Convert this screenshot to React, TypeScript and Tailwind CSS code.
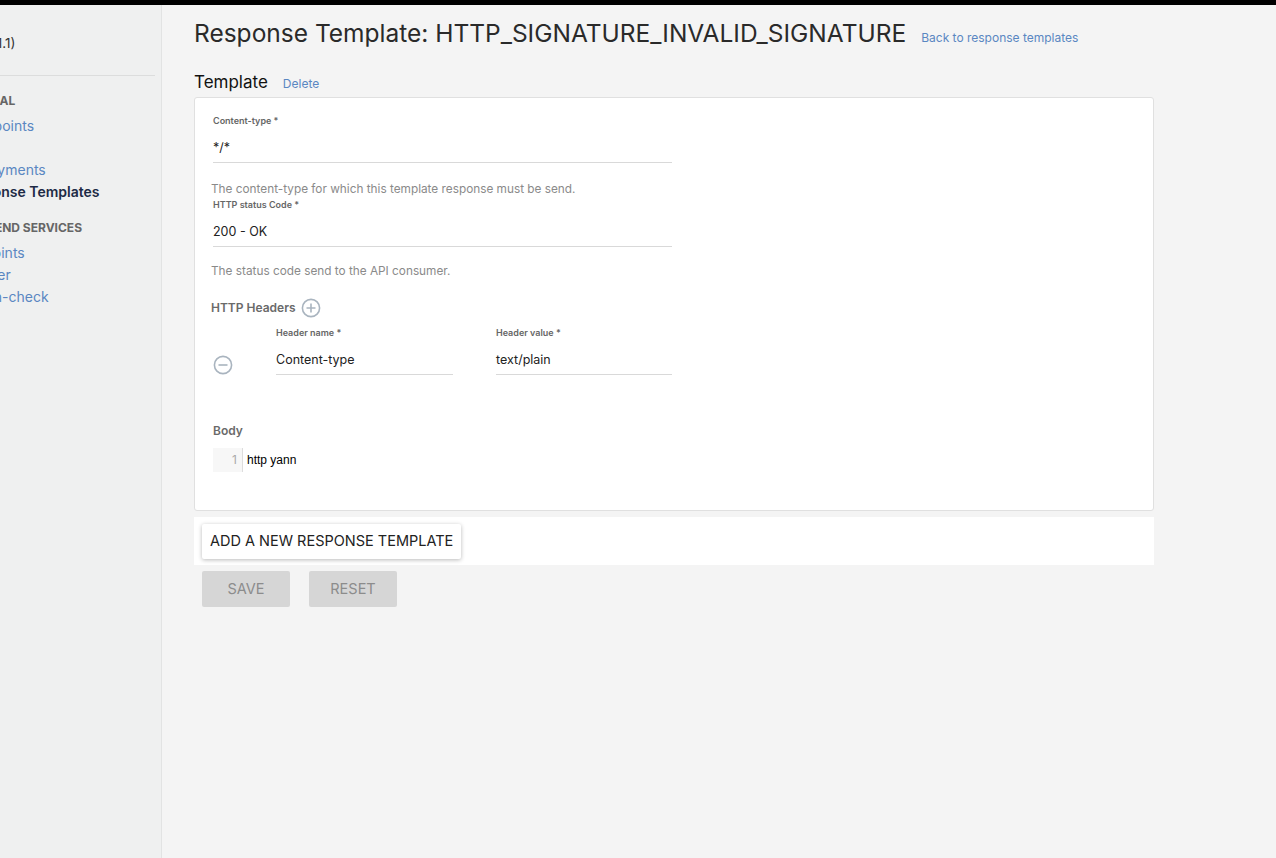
import React from 'react';

const PlusCircle = () => (
  <svg width="20" height="20" viewBox="0 0 20 20" fill="none" stroke="#a9b4bf" strokeWidth="1.6">
    <circle cx="10" cy="10" r="8.6" />
    <path d="M10 5.5v9M5.5 10h9" />
  </svg>
);

const MinusCircle = () => (
  <svg width="20" height="20" viewBox="0 0 20 20" fill="none" stroke="#a9b4bf" strokeWidth="1.6">
    <circle cx="10" cy="10" r="8.6" />
    <path d="M5.5 10h9" />
  </svg>
);

const Field: React.FC<{ label: string; value: string; width: string }> = ({ label, value, width }) => (
  <div className={width}>
    <div className="text-[9px] font-semibold text-[#666] leading-[12px]">{label}</div>
    <div className="mt-[12px] pb-[5px] text-[12.5px] text-[#222] leading-[18px] border-b border-[#d9d9d9]">{value}</div>
  </div>
);

export default function App() {
  return (
    <div className="w-[1276px] h-[858px] flex flex-col bg-[#f4f4f4] overflow-hidden" style={{ fontFamily: 'Inter, "Liberation Sans", sans-serif' }}>
      <div className="h-[5px] bg-black shrink-0" />
      <div className="flex flex-1 min-h-0">
        {/* sidebar, scrolled so the left part is hidden */}
        <aside className="w-[162px] shrink-0 bg-[#eff0f0] border-r border-[#e2e3e3] overflow-hidden">
          <div className="-ml-[41px] pr-[6px] w-[202px]">
            <div className="pt-[28px] pb-[22px] text-[13.5px] text-[#333] leading-[20px] border-b border-[#dcdddd]">
              API (v1.1)
            </div>
            <div className="pt-[16px] text-[12px] font-bold text-[#666] leading-[18px]">GENERAL</div>
            <div className="mt-[5px] flex flex-col text-[14px] leading-[22px] text-[#5a87c2]">
              <span>Entrypoints</span>
              <span>CORS</span>
              <span>Deployments</span>
              <span className="font-semibold text-[#1d2a45]">Response Templates</span>
            </div>
            <div className="pt-[16px] pl-[2px] text-[12px] font-bold text-[#666] leading-[18px]">BACKEND SERVICES</div>
            <div className="mt-[5px] flex flex-col text-[14px] leading-[22px] text-[#5a87c2]">
              <span>Endpoints</span>
              <span>Failover</span>
              <span>Health-check</span>
            </div>
          </div>
        </aside>

        <main className="flex-1 pl-[32px] pr-[122px]">
          <div className="flex items-baseline pt-[10px]">
            <h1 className="text-[24.5px] text-[#2a2a2a] leading-[36px]">Response Template: HTTP_SIGNATURE_INVALID_SIGNATURE</h1>
            <a className="ml-[15px] text-[12px] text-[#5a87c2]">Back to response templates</a>
          </div>

          <div className="flex items-baseline mt-[18px]">
            <h2 className="text-[17px] text-[#111] leading-[26px]">Template</h2>
            <a className="ml-[15px] text-[12px] text-[#5a87c2]">Delete</a>
          </div>

          <div className="mt-[2px] bg-white border border-[#e0e0e0] rounded-[3px] h-[414px] pl-[18px] pt-[17px]">
            <Field label="Content-type *" value="*/*" width="w-[459px]" />
            <p className="mt-[18px] -ml-[2px] text-[11.8px] text-[#8a8a8a] leading-[16px]">The content-type for which this template response must be send.</p>
            <div className="mt-[2px]">
              <Field label="HTTP status Code *" value="200 - OK" width="w-[459px]" />
            </div>
            <p className="mt-[16px] -ml-[2px] text-[11.8px] text-[#8a8a8a] leading-[16px]">The status code send to the API consumer.</p>

            <div className="mt-[19px] -ml-[2px] h-[20px] flex items-center gap-[5px]">
              <span className="text-[12px] font-semibold text-[#6a6a6a]">HTTP Headers</span>
              <PlusCircle />
            </div>

            <div className="mt-[9px] flex items-end">
              <div className="w-[63px]">
                <MinusCircle />
              </div>
              <Field label="Header name *" value="Content-type" width="w-[177px]" />
              <div className="w-[43px]" />
              <Field label="Header value *" value="text/plain" width="w-[176px]" />
            </div>

            <div className="mt-[48px] text-[12px] font-semibold text-[#6a6a6a] leading-[16px]">Body</div>
            <div className="mt-[9px] flex h-[24px] items-center">
              <div className="w-[30px] h-full bg-[#f7f7f7] border-r border-[#dddddd] text-right pr-[5px] text-[12px] text-[#aaa] leading-[24px]">1</div>
              <div className="pl-[4px] text-[12px] text-black leading-[24px]" style={{ fontFamily: '"Liberation Sans", Arial, sans-serif' }}>http yann</div>
            </div>
          </div>

          <div className="mt-[6px] bg-white h-[48px] flex items-center px-[8px]">
            <button className="bg-white h-[35px] px-[8px] text-[14.5px] text-[#222] rounded-[2px] shadow-[0_1px_4px_rgba(0,0,0,0.28)] uppercase">
              Add a new response template
            </button>
          </div>

          <div className="mt-[6px] ml-[8px] flex gap-[19px]">
            <button className="w-[88px] h-[36px] bg-[#d6d6d6] text-[14.5px] text-[#8c8c8c] rounded-[2px]">SAVE</button>
            <button className="w-[88px] h-[36px] bg-[#d6d6d6] text-[14.5px] text-[#8c8c8c] rounded-[2px]">RESET</button>
          </div>
        </main>
      </div>
    </div>
  );
}
